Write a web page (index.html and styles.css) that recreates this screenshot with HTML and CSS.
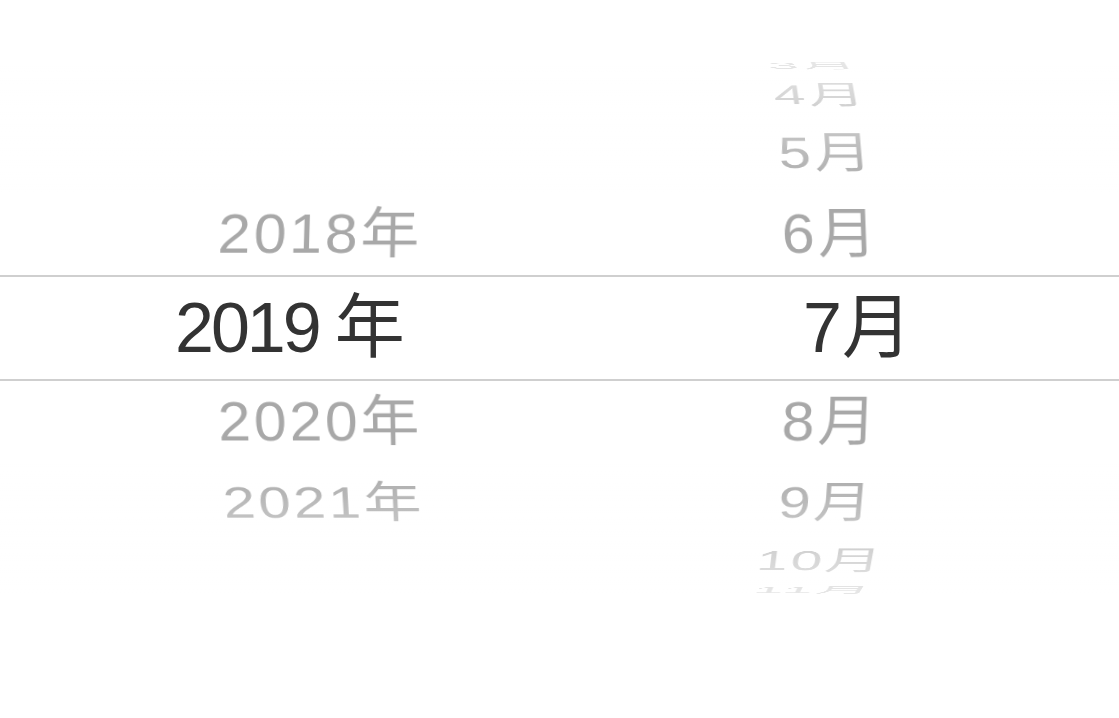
FILE: index.html
```html
<!DOCTYPE html>
<html lang="zh-CN">
<head>
<meta charset="utf-8">
<title>日期选择</title>
<link rel="stylesheet" href="styles.css">
</head>
<body>
<div class="picker">
  <div class="col col-year">
    <div class="wheel">
      <div class="item" style="--k:-1">2018年</div>
      <div class="item" style="--k:1">2020年</div>
      <div class="item" style="--k:2">2021年</div>
    </div>
  </div>
  <div class="col col-month">
    <div class="wheel">
      <div class="item" style="--k:-6">1月</div>
      <div class="item" style="--k:-5">2月</div>
      <div class="item" style="--k:-4">3月</div>
      <div class="item" style="--k:-3">4月</div>
      <div class="item" style="--k:-2">5月</div>
      <div class="item" style="--k:-1">6月</div>
      <div class="item" style="--k:1">8月</div>
      <div class="item" style="--k:2">9月</div>
      <div class="item" style="--k:3">10月</div>
      <div class="item" style="--k:4">11月</div>
      <div class="item" style="--k:5">12月</div>
    </div>
  </div>
  <div class="mask mask-top"></div>
  <div class="mask mask-bottom"></div>
  <div class="band">
    <div class="sel sel-year"><span class="num">2019</span><span class="unit">年</span></div>
    <div class="sel sel-month">7月</div>
  </div>
</div>
</body>
</html>
```
FILE: styles.css
```css
html, body {
  margin: 0;
  padding: 0;
  background: #ffffff;
}

body {
  font-family: "Liberation Sans", "Noto Sans CJK SC", sans-serif;
  width: 1119px;
  height: 718px;
  overflow: hidden;
}

.picker {
  position: relative;
  margin-top: 62px;
  height: 532px;
  display: grid;
  grid-template-columns: 638px 388px;
  overflow: hidden;
}

.col {
  position: relative;
  perspective: 3000px;
  z-index: 0;
}

.col-year {
  perspective-origin: 559.5px 266px;
}

.col-month {
  perspective-origin: -78.5px 266px;
}

.wheel {
  position: absolute;
  left: 0;
  right: 0;
  top: 50%;
  height: 0;
  transform-style: preserve-3d;
  transform: translateZ(-290px);
}

.item {
  position: absolute;
  left: 0;
  right: 0;
  top: -47px;
  height: 94px;
  line-height: 94px;
  text-align: center;
  white-space: nowrap;
  font-size: 59px;
  letter-spacing: 3px;
  color: #a8a8a8;
  backface-visibility: hidden;
  transform: rotateX(calc(var(--k) * -19deg)) translateZ(290px);
}

.mask {
  position: absolute;
  left: 0;
  right: 0;
  height: 130px;
  z-index: 1;
  pointer-events: none;
}

.mask-top {
  top: 0;
  background: linear-gradient(to bottom, rgba(255, 255, 255, 0.72), rgba(255, 255, 255, 0));
}

.mask-bottom {
  bottom: 0;
  background: linear-gradient(to top, rgba(255, 255, 255, 0.72), rgba(255, 255, 255, 0));
}

.band {
  position: absolute;
  left: 0;
  right: 0;
  top: 213px;
  height: 106px;
  box-sizing: border-box;
  border-top: 2px solid #cfcfcf;
  border-bottom: 2px solid #cfcfcf;
  background: #ffffff;
  z-index: 2;
  display: grid;
  grid-template-columns: 638px 388px;
}

.sel {
  font-size: 70px;
  line-height: 102px;
  color: #333333;
  white-space: nowrap;
}

.sel-year {
  padding-left: 175px;
}

.sel-year .num {
  letter-spacing: -3px;
}

.sel-year .unit {
  margin-left: 16px;
}

.sel-month {
  padding-left: 165px;
}
```
